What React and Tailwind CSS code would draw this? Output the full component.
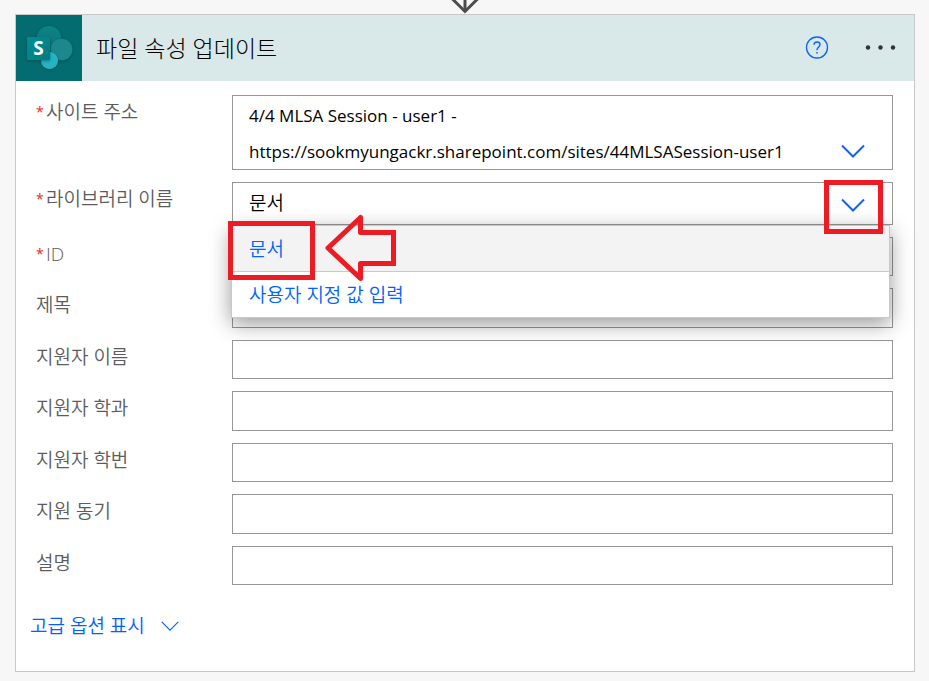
import React from "react";

const LATIN = "font-['Open_Sans','Noto_Sans_CJK_KR',sans-serif]";

const OPTIONAL_FIELDS = [
  { id: "item-id", label: "ID", required: true },
  { id: "title", label: "제목" },
  { id: "applicant-name", label: "지원자 이름" },
  { id: "applicant-major", label: "지원자 학과" },
  { id: "applicant-number", label: "지원자 학번" },
  { id: "motivation", label: "지원 동기" },
  { id: "description", label: "설명" },
];

function Chevron({ className }) {
  return (
    <svg viewBox="0 0 24 14" className={className} fill="none" stroke="currentColor" aria-hidden="true">
      <path d="M1 1.5 L12 12.5 L23 1.5" />
    </svg>
  );
}

function FlowArrow() {
  return (
    <svg width="30" height="14" viewBox="0 0 30 14" fill="none" stroke="#4d4d4d" aria-hidden="true">
      <path d="M15 0V12" strokeWidth="3" />
      <path d="M1 -2.5L15 11.5L29 -2.5" strokeWidth="3" />
    </svg>
  );
}

function SharePointLogo() {
  return (
    <svg width="66" height="66" viewBox="0 0 66 66" className="shrink-0 bg-[#036c70]" role="img" aria-label="SharePoint">
      <defs>
        <filter id="soft" x="-30%" y="-30%" width="160%" height="160%">
          <feDropShadow dx="0" dy="1" stdDeviation="1.5" floodColor="#002d30" floodOpacity="0.5" />
        </filter>
        <linearGradient id="tile" x1="0" y1="0" x2="1" y2="1">
          <stop offset="0" stopColor="#058f92" />
          <stop offset="1" stopColor="#037c80" />
        </linearGradient>
        <linearGradient id="top" x1="0" y1="0" x2="0" y2="1">
          <stop offset="0" stopColor="#0c8387" />
          <stop offset="1" stopColor="#08757a" />
        </linearGradient>
      </defs>
      <circle cx="33" cy="23" r="12" fill="url(#top)" filter="url(#soft)" />
      <circle cx="45.500" cy="34.500" r="10.800" fill="#1a888e" filter="url(#soft)" />
      <circle cx="33.500" cy="45.500" r="8.500" fill="#27b4c3" filter="url(#soft)" />
      <rect x="11" y="22" width="23" height="23" rx="1" fill="url(#tile)" filter="url(#soft)" />
      <text x="22.500" y="40" textAnchor="middle" fontSize="19" fontWeight="700" fill="#fff" fontFamily="'Open Sans', sans-serif">
        S
      </text>
    </svg>
  );
}

function FieldRow({ id, label, required, children }) {
  return (
    <div className="flex items-stretch">
      <label htmlFor={id} className="flex w-[196px] shrink-0 items-start text-[19px] font-[350] leading-[34px] text-[#5c5c5c]">
        {required && <span className="w-2.5 shrink-0 text-sm font-normal leading-[34px] text-[#f0281e]">*</span>}
        <span>{label}</span>
      </label>
      <div className="relative flex min-w-0 flex-1">{children}</div>
    </div>
  );
}

function LibraryMenu() {
  return (
    <ul
      role="listbox"
      aria-label="라이브러리 이름"
      className="absolute -left-px right-[3px] top-[43px] z-10 border border-[#c8c8c8] bg-white text-[19px] font-[350] text-[#0062ff] shadow-[0_6px_20px_rgba(0,0,0,0.4)]"
    >
      <li className="border-b border-[#c8c8c8] bg-[#f3f3f3]">
        <button type="button" role="option" aria-selected="true" className="block h-[45px] w-full px-[17px] pt-0.5 text-left">
          문서
        </button>
      </li>
      <li>
        <button type="button" role="option" aria-selected="false" className="block h-[45px] w-full px-[17px] pt-0.5 text-left">
          사용자 지정 값 입력
        </button>
      </li>
    </ul>
  );
}

function Annotations() {
  return (
    <div className="pointer-events-none absolute inset-0 z-20">
      <div className="absolute -left-1 top-[39px] h-[59px] w-[87px] border-5 border-[#ed1c24]" />
      <div className="absolute -top-0.5 right-2.5 h-[54px] w-[59px] border-5 border-[#ed1c24]" />
      <svg width="74" height="70" viewBox="0 0 74 70" className="absolute left-[92px] top-8" fill="none" stroke="#ed1c24" strokeWidth="5" aria-hidden="true">
        <path strokeLinejoin="round" d="M4 34L36.500 3.500V18.500H69.500V49.500H36.500V64.500Z" />
        <path strokeLinejoin="miter" d="M36.500 18.500H69.500V49.500H36.500" />
      </svg>
    </div>
  );
}

export default function App() {
  return (
    <div className={`min-h-screen bg-[#f7f7f7] pb-[9px] pl-[15px] pr-3.5 ${LATIN}`}>
      <div className="flex justify-center">
        <FlowArrow />
      </div>
      <main className="border border-[#c8c8c8] bg-white">
        <header className="flex items-center bg-[#d9e8e8]">
          <SharePointLogo />
          <h1 className="ml-3.5 flex-1 text-[23px] font-light leading-9 text-black">파일 속성 업데이트</h1>
          <button type="button" aria-label="도움말" className="mr-9 text-[#0f62fe]">
            <svg width="24" height="24" viewBox="0 0 24 24" fill="none" stroke="currentColor" strokeWidth="1.300" className="block">
              <circle cx="12" cy="11.500" r="10.500" />
              <path strokeWidth="1.400" d="M9 8.800C9 7 10.200 6 12 6C13.800 6 15 7.100 15 8.600C15 11 12 11.200 12 14.200" />
              <circle cx="12" cy="16.800" r="0.900" fill="currentColor" stroke="none" />
            </svg>
          </button>
          <button type="button" aria-label="추가 옵션" className="mr-[17px] text-[#333]">
            <svg width="32" height="24" viewBox="0 0 32 24" fill="currentColor" className="block">
              <circle cx="3" cy="11.500" r="2.200" />
              <circle cx="15.500" cy="11.500" r="2.200" />
              <circle cx="28" cy="11.500" r="2.200" />
            </svg>
          </button>
        </header>

        <form className="flex flex-col gap-3 pb-[27px] pl-5 pr-[21px] pt-3.5">
          <FieldRow id="site" label="사이트 주소" required>
            <textarea
              id="site"
              rows={2}
              readOnly
              className="block h-[75px] w-full resize-none overflow-hidden border border-[#979797] bg-white pl-4 pr-20 pt-0.5 text-[17px] leading-9 text-black outline-none"
              value="4/4 MLSA Session - user1 - https://sookmyungackr.sharepoint.com/sites/44MLSASession-user1"
            />
            <button type="button" aria-label="사이트 주소 목록 열기" className="absolute bottom-3 right-7 text-[#0f62fe]">
              <Chevron className="block h-3.5 w-6 stroke-2" />
            </button>
          </FieldRow>

          <FieldRow id="library" label="라이브러리 이름" required>
            <select
              id="library"
              defaultValue="문서"
              className="block h-[43px] w-full appearance-none border border-[#979797] bg-white px-4 text-[19px] font-[350] text-black outline-none"
            >
              <option>문서</option>
            </select>
            <Chevron className="pointer-events-none absolute right-7 top-4 h-3.5 w-6 stroke-2 text-[#0f62fe]" />
            <LibraryMenu />
            <Annotations />
          </FieldRow>

          <div className="grid min-h-[348px] auto-rows-fr gap-3">
            {OPTIONAL_FIELDS.map((field) => (
              <FieldRow key={field.id} {...field}>
                <input id={field.id} type="text" className="block w-full border border-[#979797] bg-white px-4 text-[17px] outline-none" />
              </FieldRow>
            ))}
          </div>

          <button type="button" className="-ml-1.5 mt-[11px] flex items-center gap-4 self-start text-[19px] font-[350] leading-9 text-[#0062ff]">
            고급 옵션 표시
            <Chevron className="h-3 w-[18px] stroke-[1.5]" />
          </button>
        </form>
      </main>
    </div>
  );
}
